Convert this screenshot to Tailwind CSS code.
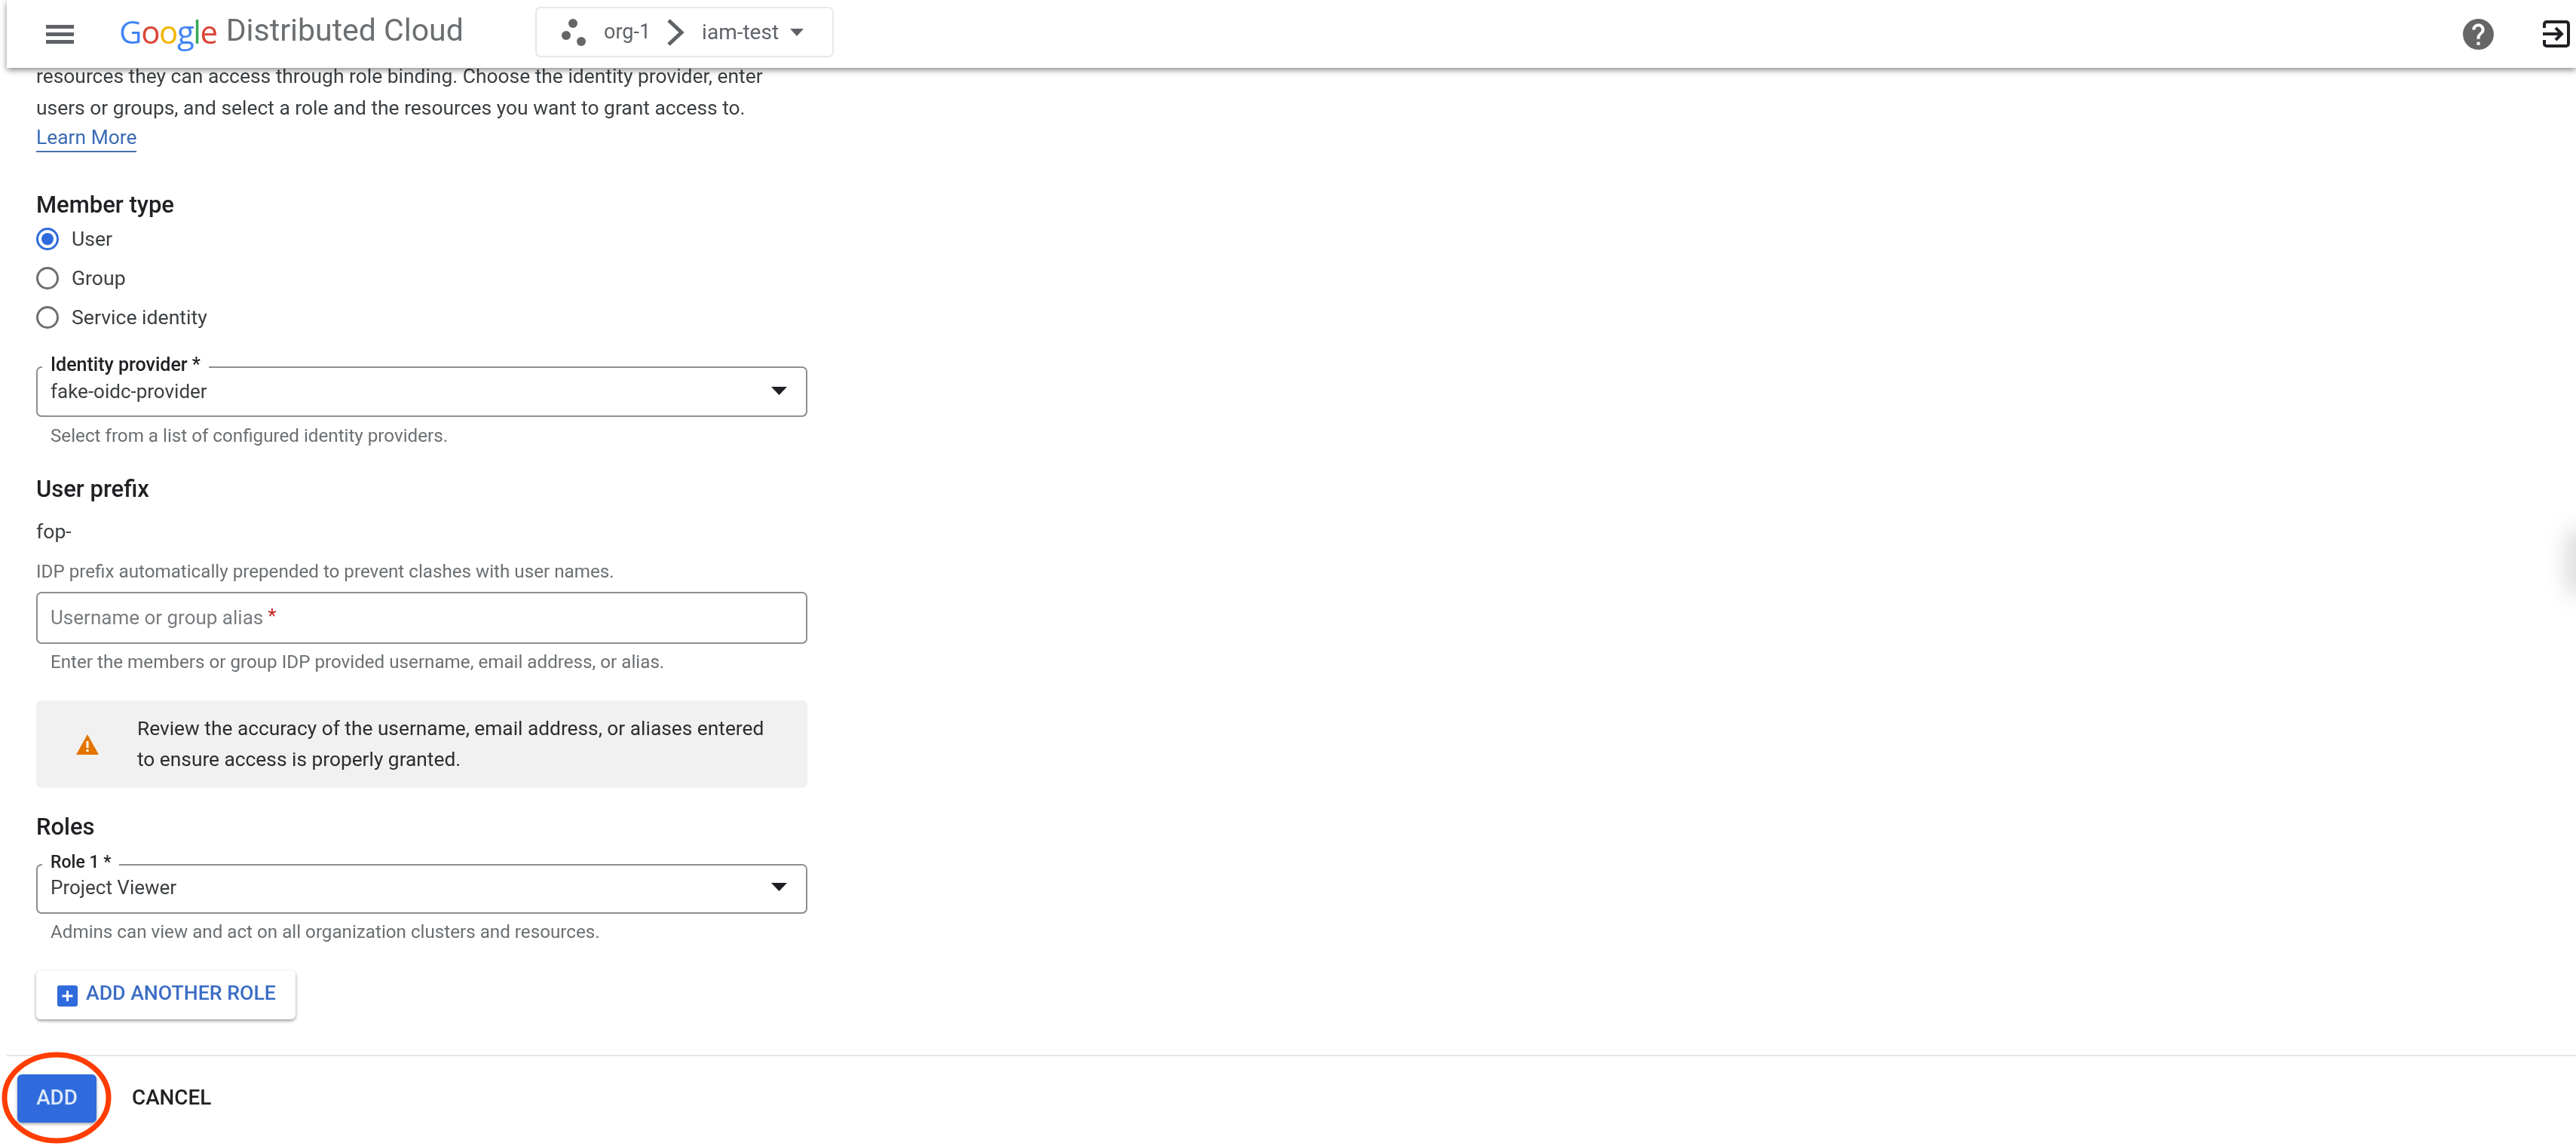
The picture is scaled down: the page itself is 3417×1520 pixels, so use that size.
<!DOCTYPE html>
<html lang="en">
<head>
    <meta charset="UTF-8">
    <title>Google Distributed Cloud</title>
    <script src="https://cdn.jsdelivr.net/npm/@tailwindcss/browser@4"></script>
</head>
<body class="bg-white">
<div class="relative flex flex-col w-[3417px] h-[1520px] overflow-hidden bg-white font-['Roboto',sans-serif] text-[#3c4043] blur-[0.6px]">

    <!-- Top bar -->
    <header class="relative z-10 flex items-center h-[90px] shrink-0 ml-[9px] pl-[52px] bg-white shadow-[0_3px_8px_rgba(0,0,0,0.45)]">
        <div class="flex flex-col gap-[5px] w-[37px] shrink-0">
            <span class="h-[5px] bg-[#5f6368]"></span>
            <span class="h-[5px] bg-[#5f6368]"></span>
            <span class="h-[5px] bg-[#5f6368]"></span>
        </div>
        <div class="flex items-center w-[552px] ml-[60px] -mt-[8px] whitespace-nowrap">
            <span class="font-['Open_Sans',sans-serif] text-[42px] tracking-[-1.4px]"><span class="text-[#4285f4]">G</span><span class="text-[#db4437]">o</span><span class="text-[#f4b400]">o</span><span class="text-[#4285f4]">g</span><span class="text-[#34a853]">l</span><span class="text-[#db4437]">e</span></span>
            <span class="ml-[12px] text-[41px] text-[#6b6f72]">Distributed Cloud</span>
        </div>
        <div class="flex items-center w-[396px] h-[67px] -mt-[5px] border-2 border-[#e8e8e8] rounded-[7px] text-[27px] text-[#5f6368]">
            <svg class="ml-[33px] shrink-0" width="36" height="38" viewBox="0 0 36 38" fill="#666">
                <circle cx="15" cy="7" r="6"/><circle cx="6" cy="23" r="6"/><circle cx="26" cy="31" r="6"/>
            </svg>
            <span class="ml-[20px]">org-1</span>
            <svg class="ml-[21px] shrink-0" width="24" height="36" viewBox="0 0 24 36" fill="none" stroke="#5f6368" stroke-width="5"><path d="M3 2l17 16L3 34"/></svg>
            <span class="ml-[23px] text-[28px]">iam-test</span>
            <svg class="ml-[15px] shrink-0" width="18" height="10" viewBox="0 0 18 10" fill="#5f6368"><path d="M0 0h18L9 10z"/></svg>
        </div>
        <svg class="ml-auto shrink-0" width="49" height="49" viewBox="0 0 24 24" fill="#666"><path d="M12 2C6.48 2 2 6.48 2 12s4.48 10 10 10 10-4.48 10-10S17.52 2 12 2zm1 17h-2v-2h2v2zm2.07-7.75l-.9.92C13.45 12.9 13 13.5 13 15h-2v-.5c0-1.1.45-2.1 1.17-2.83l1.24-1.26c.37-.36.59-.86.59-1.41 0-1.1-.9-2-2-2s-2 .9-2 2H8c0-2.21 1.79-4 4-4s4 1.79 4 4c0 .88-.36 1.68-.93 2.25z"/></svg>
        <svg class="ml-[61px] mr-[8px] shrink-0" width="36" height="36" viewBox="0 0 36 36" fill="none" stroke="#202124" stroke-width="4"><path d="M2 10V5a3 3 0 0 1 3-3h26a3 3 0 0 1 3 3v26a3 3 0 0 1-3 3H5a3 3 0 0 1-3-3v-5"/><path d="M0 18h25M17 10l8 8-8 8"/></svg>
    </header>

    <!-- Form -->
    <main class="flex-1 min-h-0 overflow-hidden pl-[48px] w-[1071px] box-content">
        <div class="-mt-[10px] w-[1023px] text-[26.4px] leading-[42px]">
            <p class="whitespace-nowrap">resources they can access through role binding. Choose the identity provider, enter<br>users or groups, and select a role and the resources you want to grant access to.</p>
            <a class="block w-fit h-[38px] leading-[36px] border-b-2 border-[#4a6fb0] text-[#3b6cb4]">Learn More</a>
        </div>

        <h2 class="mt-[52px] text-[31px] leading-[36px] font-medium text-[#202124]">Member type</h2>
        <div class="mt-px text-[26.6px] text-[#3c4043]">
            <label class="flex items-center h-[52px] gap-[17px]">
                <span class="flex items-center justify-center w-[30px] h-[30px] rounded-full border-[3px] border-[#2f6bdc]"><span class="w-[16px] h-[16px] rounded-full bg-[#2f6bdc]"></span></span>
                User
            </label>
            <label class="flex items-center h-[52px] gap-[17px]">
                <span class="w-[30px] h-[30px] rounded-full border-[3px] border-[#6f6f6f]"></span>
                Group
            </label>
            <label class="flex items-center h-[52px] gap-[17px]">
                <span class="w-[30px] h-[30px] rounded-full border-[3px] border-[#6f6f6f]"></span>
                Service identity
            </label>
        </div>

        <div class="relative flex items-start justify-between mt-[39px] h-[67px] w-[1023px] border-2 border-[#8f8f8f] rounded-[7px] pl-[17px] pr-[25px]">
            <span class="absolute left-[6px] -top-[20px] px-[11px] bg-white text-[25px] leading-[32px] font-medium text-[#202124] whitespace-nowrap">Identity provider *</span>
            <span class="mt-[13px] text-[26px] leading-[36px]">fake-oidc-provider</span>
            <svg class="mt-[25px]" width="21" height="11" viewBox="0 0 21 11" fill="#202124"><path d="M0 0h21L10.5 11z"/></svg>
        </div>
        <p class="mt-[10px] pl-[19px] text-[24.2px] leading-[30px] text-[#6b6f72]">Select from a list of configured identity providers.</p>

        <h2 class="mt-[38px] text-[31px] leading-[36px] font-medium text-[#202124]">User prefix</h2>
        <p class="mt-[20px] text-[26.6px] leading-[36px]">fop-</p>
        <p class="mt-[20px] text-[24.2px] leading-[30px] text-[#6b6f72]">IDP prefix automatically prepended to prevent clashes with user names.</p>

        <div class="flex items-center mt-[12px] h-[69px] w-[1023px] border-2 border-[#8f8f8f] rounded-[7px] pl-[17px] text-[26px] text-[#7a7d80]">
            Username or group alias<span class="ml-[6px] -mt-[4px] text-[#c5221f]">*</span>
        </div>
        <p class="mt-[9px] pl-[19px] text-[24.2px] leading-[30px] text-[#6b6f72]">Enter the members or group IDP provided username, email address, or alias.</p>

        <div class="flex items-center mt-[36px] h-[116px] w-[1023px] rounded-[6px] bg-[#f1f1f1] pl-[53px]">
            <svg class="shrink-0" width="30" height="27" viewBox="0 0 30 27"><path d="M15 0L30 27H0z" fill="#e37400"/><path d="M13.5 9h3v9h-3zM13.5 20h3v3h-3z" fill="#fff"/></svg>
            <p class="ml-[51px] text-[26.3px] leading-[41px] text-[#2b2d2f] whitespace-nowrap">Review the accuracy of the username, email address, or aliases entered<br>to ensure access is properly granted.</p>
        </div>

        <h2 class="mt-[34px] text-[31px] leading-[36px] font-medium text-[#202124]">Roles</h2>
        <div class="relative flex items-start justify-between mt-[31px] h-[66px] w-[1023px] border-2 border-[#8f8f8f] rounded-[7px] pl-[17px] pr-[25px]">
            <span class="absolute left-[6px] -top-[20px] px-[11px] bg-white text-[23px] leading-[32px] font-medium text-[#202124] whitespace-nowrap">Role 1 *</span>
            <span class="mt-[11px] text-[26px] leading-[36px]">Project Viewer</span>
            <svg class="mt-[23px]" width="21" height="11" viewBox="0 0 21 11" fill="#202124"><path d="M0 0h21L10.5 11z"/></svg>
        </div>
        <p class="mt-[9px] pl-[19px] text-[24.2px] leading-[30px] text-[#6b6f72]">Admins can view and act on all organization clusters and resources.</p>

        <button class="flex items-start mt-[36px] h-[65px] w-[344px] pl-[28px] rounded-[6px] bg-white shadow-[0_2px_4px_rgba(0,0,0,0.4)] text-[26.7px] font-medium text-[#3b6cc4]">
            <svg class="mt-[20px] shrink-0" width="27" height="28" viewBox="0 0 27 28"><rect width="27" height="28" rx="3" fill="#2f6bdc"/><path d="M12 7h3v5.500h5.500v3H15V21h-3v-5.500H6.500v-3H12z" fill="#fff"/></svg>
            <span class="ml-[11px] mt-[12px] leading-[36px] whitespace-nowrap">ADD ANOTHER ROLE</span>
        </button>
    </main>

    <!-- Actions -->
    <footer class="flex items-start h-[121px] shrink-0 ml-[9px] border-t-2 border-[#e6e6e6] pt-[24px] pl-[14px] text-[27.8px] font-medium">
        <button class="w-[105px] h-[64px] pb-[3px] rounded-[6px] bg-[#2f6bdc] text-[#dce8fb] shadow-[0_2px_4px_rgba(0,0,0,0.35)]">ADD</button>
        <button class="ml-[47px] h-[64px] pb-[3px] text-[#202124]">CANCEL</button>
    </footer>

    <!-- Red highlight drawn over the screenshot -->
    <svg class="absolute left-0 top-[1394px]" width="152" height="126" viewBox="0 0 152 126" fill="none"><ellipse cx="75" cy="62" rx="69" ry="57" stroke="#ff3d00" stroke-width="7"/></svg>
    <div class="absolute -right-[18px] top-[700px] w-[30px] h-[90px] rounded-full bg-black/15 blur-[14px]"></div>
</div>
</body>
</html>
